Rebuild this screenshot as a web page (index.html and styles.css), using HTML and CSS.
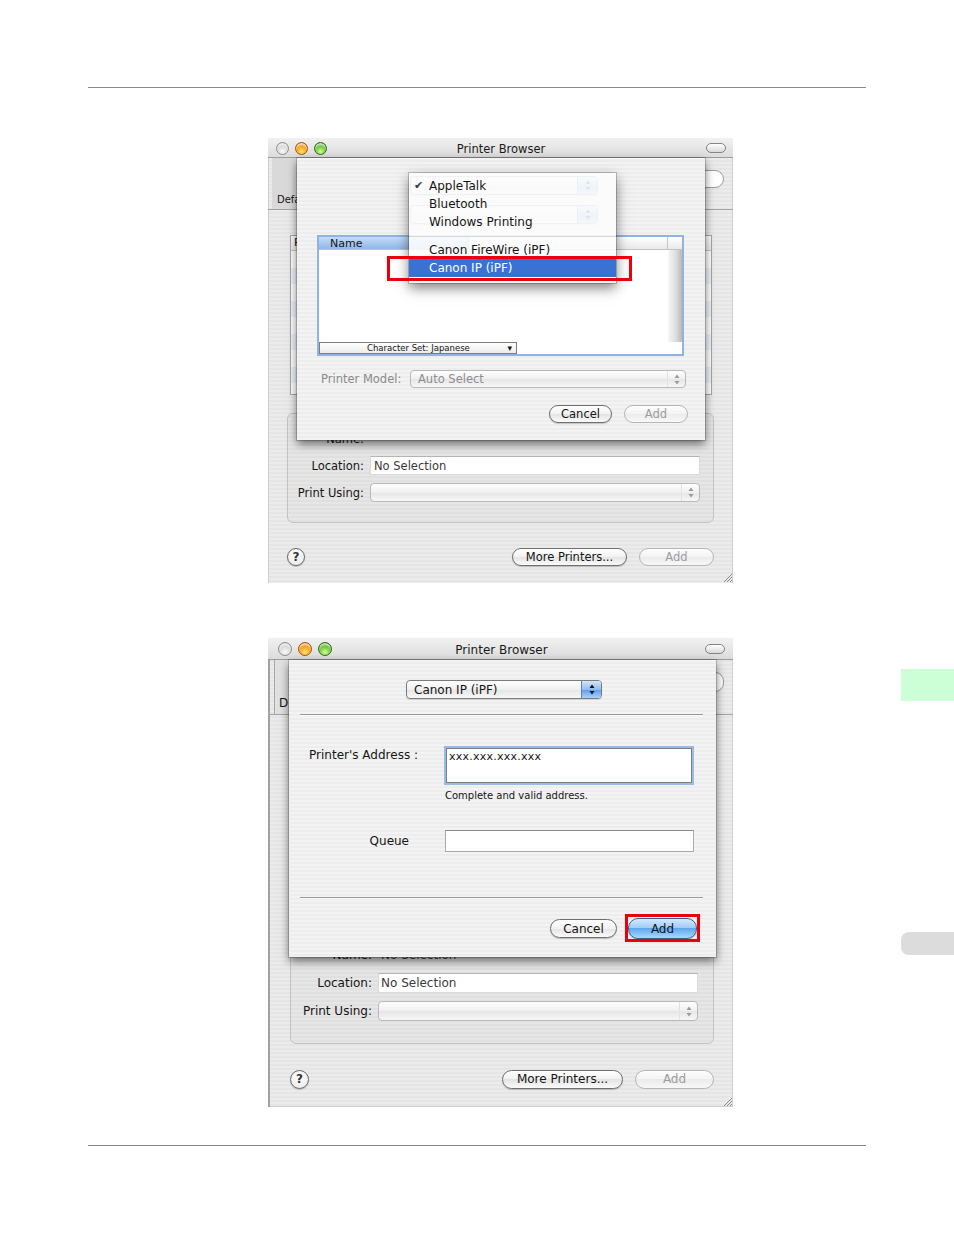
FILE: index.html
```html
<!DOCTYPE html>
<html lang="en">

<head>
    <meta charset="UTF-8">
    <meta name="viewport" content="width=device-width, initial-scale=1.0">
    <title>Printer Browser</title>
    <link rel="stylesheet" href="styles.css">
</head>

<body>
    <div class="page">
        <div class="rule"></div>

        <!-- shot 1 : connection menu open on the IP sheet -->
        <div class="win win-a">
            <div class="titlebar">
                <div class="lights"><i class="light gray"></i><i class="light amber"></i><i class="light green"></i></div>
                <div class="title">Printer Browser</div>
                <div class="pill"></div>
            </div>
            <div class="toolbar">
                <div class="tool"><span>Defa</span></div>
                <div class="search"></div>
            </div>
            <div class="content">
                <div class="plist">
                    <div class="plist-head">P</div>
                    <div class="plist-body"></div>
                </div>
                <div class="group">
                    <label>Name:</label><div class="field plain"></div>
                    <label>Location:</label><div class="field">No Selection</div>
                    <label>Print Using:</label>
                    <div class="popup off"><span class="ptext"></span><span class="arrows"><svg class="ud" width="6" height="11" viewBox="0 0 6 11"><path d="M3 .5L5.5 4H.5zM3 10.5L.5 7h5z"/></svg></span></div>
                </div>
                <div class="footer">
                    <span class="help">?</span>
                    <span class="btn more">More Printers...</span>
                    <span class="btn off add">Add</span>
                </div>
            </div>
            <svg class="grip" width="11" height="11" viewBox="0 0 11 11"><path d="M10 2L2 10M10 5L5 10M10 8L8 10" stroke="#8c8c8c" stroke-width="1"/></svg>

            <div class="sheet sheet-a">
                <div class="popup blue ghost"><span class="ptext"></span><span class="arrows"><svg class="ud" width="6" height="11" viewBox="0 0 6 11"><path d="M3 .5L5.5 4H.5zM3 10.5L.5 7h5z"/></svg></span></div>
                <div class="popup blue ghost second"><span class="ptext"></span><span class="arrows"><svg class="ud" width="6" height="11" viewBox="0 0 6 11"><path d="M3 .5L5.5 4H.5zM3 10.5L.5 7h5z"/></svg></span></div>
                <div class="listbox">
                    <div class="lb-head"><span class="hc sel">Name</span><span class="hc"></span><span class="hc corner"></span></div>
                    <div class="lb-body"></div>
                    <div class="lb-scroll"></div>
                    <div class="lb-foot"><span class="charset">Character Set: Japanese<b>&#9662;</b></span></div>
                    <div class="lb-end"></div>
                </div>
                <div class="model-row">
                    <span class="dim">Printer Model:</span>
                    <div class="popup off"><span class="ptext">Auto Select</span><span class="arrows"><svg class="ud" width="6" height="11" viewBox="0 0 6 11"><path d="M3 .5L5.5 4H.5zM3 10.5L.5 7h5z"/></svg></span></div>
                </div>
                <div class="btns">
                    <span class="btn cancel">Cancel</span>
                    <span class="btn off add">Add</span>
                </div>
            </div>

            <div class="menu">
                <div class="mi"><span class="tick">&#10004;</span><span>AppleTalk</span></div>
                <div class="mi"><span></span><span>Bluetooth</span></div>
                <div class="mi"><span></span><span>Windows Printing</span></div>
                <div class="msep"></div>
                <div class="mi"><span></span><span>Canon FireWire (iPF)</span></div>
                <div class="mi on"><span></span><span>Canon IP (iPF)</span></div>
            </div>
            <div class="mark mark-a"></div>
        </div>

        <!-- shot 2 : address typed, Add is default -->
        <div class="win win-b">
            <div class="titlebar">
                <div class="lights"><i class="light gray"></i><i class="light amber"></i><i class="light green"></i></div>
                <div class="title">Printer Browser</div>
                <div class="pill"></div>
            </div>
            <div class="toolbar">
                <div class="tool"><span>D</span></div>
                <div class="search"></div>
            </div>
            <div class="content">
                <div class="plist">
                    <div class="plist-head"></div>
                    <div class="plist-body"></div>
                </div>
                <div class="group">
                    <label>Name:</label><div class="field plain">No Selection</div>
                    <label>Location:</label><div class="field">No Selection</div>
                    <label>Print Using:</label>
                    <div class="popup off"><span class="ptext"></span><span class="arrows"><svg class="ud" width="6" height="11" viewBox="0 0 6 11"><path d="M3 .5L5.5 4H.5zM3 10.5L.5 7h5z"/></svg></span></div>
                </div>
                <div class="footer">
                    <span class="help">?</span>
                    <span class="btn more">More Printers...</span>
                    <span class="btn off add">Add</span>
                </div>
            </div>
            <svg class="grip" width="11" height="11" viewBox="0 0 11 11"><path d="M10 2L2 10M10 5L5 10M10 8L8 10" stroke="#8c8c8c" stroke-width="1"/></svg>

            <div class="sheet sheet-b">
                <div class="popup blue conn"><span class="ptext">Canon IP (iPF)</span><span class="arrows"><svg class="ud" width="6" height="11" viewBox="0 0 6 11"><path d="M3 .5L5.5 4H.5zM3 10.5L.5 7h5z"/></svg></span></div>
                <div class="sep first"></div>
                <div class="frow addr-row">
                    <span class="flabel">Printer's Address :</span>
                    <div class="addr">xxx.xxx.xxx.xxx</div>
                </div>
                <div class="frow">
                    <span></span>
                    <span class="hint">Complete and valid address.</span>
                </div>
                <div class="frow queue-row">
                    <span class="flabel queue">Queue</span>
                    <div class="qfield"></div>
                </div>
                <div class="sep second"></div>
                <div class="btns">
                    <span class="btn cancel">Cancel</span>
                    <span class="btn default">Add</span>
                </div>
            </div>
            <div class="mark mark-b"></div>
        </div>

        <div class="rule rule-bottom"></div>

        <div class="tab tab-green"></div>
        <div class="tab tab-gray"></div>
    </div>
</body>

</html>
```

FILE: styles.css
```css
body {
    margin: 0;
    background: #fff;
    font-family: "DejaVu Sans", "Liberation Sans", sans-serif;
    font-size: 11.5px;
    color: #151515;
}

.page {
    position: relative;
    width: 954px;
    height: 1235px;
    padding-top: 87px;
    box-sizing: border-box;
    overflow: hidden;
}

.rule {
    margin: 0 88px;
    border-top: 1px solid #8a8a8a;
}

.rule-bottom {
    margin-top: 38px;
}

/* side index tabs */
.tab {
    position: absolute;
    right: 0;
    width: 53px;
}

.tab-green {
    top: 669px;
    height: 32px;
    background: #ccffd5;
}

.tab-gray {
    top: 932px;
    height: 23px;
    background: #dcdcdc;
    border-radius: 8px 0 0 8px;
}

/* window */
.win {
    position: relative;
    margin-left: 268px;
    width: 465px;
    box-sizing: border-box;
    background: repeating-linear-gradient(#ebebeb 0 2px, #e5e5e5 2px 4px);
}

.win-a {
    margin-top: 50px;
    height: 445px;
    box-shadow: inset 1px 0 #cfcfcf, inset -1px 0 #cfcfcf;
}

.win-b {
    margin-top: 55px;
    height: 469px;
    box-shadow: inset 2px 0 #a3a3a3, inset -1px 0 #cfcfcf, inset 0 -1px #d0d0d0;
}

.titlebar {
    display: grid;
    grid-template-columns: 1fr auto 1fr;
    align-items: center;
    height: 20px;
    box-sizing: border-box;
    padding: 1px 7px 0 8px;
    background: linear-gradient(#f1f1f1, #dcdcdc);
    border-bottom: 1px solid #9c9c9c;
}

.win-b .titlebar {
    height: 22px;
    padding: 1px 8px 0 10px;
    font-size: 12px;
}

.lights {
    display: flex;
    gap: 6px;
}

.light {
    width: 13px;
    height: 13px;
    border-radius: 50%;
    box-sizing: border-box;
    box-shadow: inset 0 2px 2px rgba(255, 255, 255, .75);
}

.win-b .light {
    width: 14px;
    height: 14px;
}

.light.gray {
    background: radial-gradient(circle at 50% 75%, #fafafa, #d6d6d6 55%, #b5b5b5);
    border: 1px solid #8e8e8e;
}

.light.amber {
    background: radial-gradient(circle at 50% 78%, #ffe27a, #f5a21c 50%, #cf6a00);
    border: 1px solid #a85800;
}

.light.green {
    background: radial-gradient(circle at 50% 78%, #dcff9c, #6ec63a 50%, #2f8c12);
    border: 1px solid #2b6d14;
}

.title {
    padding-top: 2px;
    color: #1a1a1a;
}

.pill {
    justify-self: end;
    width: 18px;
    height: 8px;
    border: 1px solid #858585;
    border-radius: 5px;
    background: linear-gradient(#fff, #d9d9d9);
}

.toolbar {
    display: flex;
    justify-content: space-between;
    height: 52px;
    box-sizing: border-box;
    border-bottom: 1px solid #a3a3a3;
}

.win-b .toolbar {
    height: 55px;
}

.tool {
    display: flex;
    align-items: flex-end;
    margin-left: 4px;
    width: 90px;
    padding: 0 0 4px 5px;
    background: #d9d9d9;
    font-size: 10px;
    white-space: nowrap;
}

.win-b .tool {
    margin-left: 6px;
    padding-left: 4px;
    border-left: 1px solid #a9a9a9;
    background: #e1e1e1;
    font-size: 12px;
}

.search {
    margin: 12px 9px 0 0;
    width: 120px;
    height: 16px;
    border: 1px solid #9a9a9a;
    border-radius: 9px;
    background: #fff;
}

.win-b .search {
    height: 18px;
}

.content {
    padding: 25px 19px 17px 19px;
}

.win-b .content {
    padding: 22px 19px 19px 22px;
}

.plist {
    margin: 0 2px 0 3px;
    height: 160px;
    border: 1px solid #a5a5a5;
    box-sizing: border-box;
    background: #fff;
}

.win-b .plist {
    margin: 0;
    height: 176px;
}

.plist-head {
    height: 14px;
    padding-left: 3px;
    border-bottom: 1px solid #c6c6c6;
    background: linear-gradient(#fff, #ececec);
    font-size: 11px;
    line-height: 14px;
}

.plist-body {
    height: calc(100% - 15px);
    background: repeating-linear-gradient(#fff 0 17px, #edf3fe 17px 33px);
}

.group {
    display: grid;
    grid-template-columns: 70px 330px;
    column-gap: 6px;
    row-gap: 8px;
    align-items: center;
    margin-top: 18px;
    padding: 15px 15px 20px 6px;
    border: 1px solid #c2c2c2;
    border-radius: 6px;
    background: rgba(0, 0, 0, .018);
}

.win-b .group {
    grid-template-columns: 75px 320px;
    padding: 13px 15px 22px 6px;
    font-size: 12px;
}

.group label {
    text-align: right;
    white-space: nowrap;
}

.field {
    height: 19px;
    box-sizing: border-box;
    padding-left: 3px;
    line-height: 18px;
    background: #fff;
    border: 1px solid #dadada;
    border-top-color: #b5b5b5;
    color: #3a3a3a;
}

.win-b .field {
    height: 20px;
    line-height: 19px;
    padding-left: 2px;
}

.field.plain {
    background: transparent;
    border-color: transparent;
}

.win-b .group .popup {
    height: 20px;
}

/* aqua popup */
.popup {
    display: flex;
    align-items: center;
    height: 19px;
    box-sizing: border-box;
    border: 1px solid #8a8a8a;
    border-radius: 4px;
    background: linear-gradient(#fefefe, #f0f0f0 50%, #e5e5e5 50%, #f7f7f7);
    box-shadow: 0 1px 1px rgba(0, 0, 0, .12);
}

.popup .ptext {
    flex: 1;
    padding-left: 7px;
    white-space: nowrap;
}

.popup .arrows {
    display: flex;
    align-items: center;
    justify-content: center;
    width: 17px;
    height: 100%;
    border-left: 1px solid #cfcfcf;
    color: #333;
}

.ud {
    fill: currentColor;
}

.popup.off {
    border-color: #b9b9b9;
    color: #8d8d8d;
    box-shadow: none;
}

.popup.off .arrows {
    color: #9a9a9a;
    border-left-color: #e2e2e2;
}

.popup.blue .arrows {
    width: 19px;
    border-left: 1px solid #5a86c0;
    border-radius: 0 3px 3px 0;
    background: linear-gradient(#d2e6fc, #8fbdf2 50%, #5c9be8 50%, #a9d2fa);
    color: #111;
}

/* aqua push buttons */
.btn {
    display: inline-flex;
    align-items: center;
    justify-content: center;
    height: 18px;
    box-sizing: border-box;
    border: 1px solid #6f6f6f;
    border-radius: 10px;
    background: linear-gradient(#ffffff, #f1f1f1 50%, #e3e3e3 50%, #fafafa);
    box-shadow: 0 1px 1px rgba(0, 0, 0, .2);
    white-space: nowrap;
}

.btn.off {
    border-color: #b6b6b6;
    color: #9c9c9c;
    box-shadow: none;
    background: linear-gradient(#fdfdfd, #f3f3f3 50%, #ebebeb 50%, #f8f8f8);
}

.btn.default {
    border-color: #3d5f94;
    background: linear-gradient(#d4e8fd, #9ccaf6 50%, #5fa8ef 50%, #a8dafd);
}

.footer {
    display: flex;
    align-items: center;
    gap: 12px;
    height: 18px;
    margin-top: 25px;
}

.win-b .footer {
    height: 20px;
    font-size: 12px;
}

.help {
    width: 18px;
    height: 18px;
    box-sizing: border-box;
    border: 1px solid #6a6a6a;
    border-radius: 50%;
    background: radial-gradient(circle at 50% 35%, #fff, #e6e6e6);
    box-shadow: 0 1px 1px rgba(0, 0, 0, .2);
    text-align: center;
    font-size: 12px;
    font-weight: bold;
    line-height: 16px;
    color: #333;
}

.win-b .help {
    width: 19px;
    height: 19px;
    line-height: 17px;
}

.footer .more {
    margin-left: auto;
    width: 115px;
}

.footer .add {
    width: 75px;
}

.win-b .footer .btn {
    height: 19px;
}

.win-b .footer .more {
    width: 121px;
}

.win-b .footer .add {
    width: 79px;
}

.grip {
    position: absolute;
    right: 0;
    bottom: 0;
}

/* sheets */
.sheet {
    position: absolute;
    box-sizing: border-box;
    background: repeating-linear-gradient(#f3f3f3 0 2px, #ededed 2px 4px);
    box-shadow: 0 0 0 1px rgba(0, 0, 0, .18), 0 4px 9px rgba(0, 0, 0, .55);
}

.sheet-a {
    left: 29px;
    top: 20px;
    width: 408px;
    height: 282px;
    padding: 18px 17px 17px 20px;
}

.ghost {
    margin-left: 93px;
    width: 188px;
    color: #555;
}

.ghost.second {
    margin-top: 10px;
}

.listbox {
    display: grid;
    grid-template-rows: 13px 1fr 12px;
    grid-template-columns: 1fr 14px;
    margin-top: 11px;
    width: 367px;
    height: 121px;
    box-sizing: border-box;
    border: 2px solid #8fb4e4;
    background: #fff;
}

.lb-head {
    grid-column: 1 / 3;
    display: flex;
    border-bottom: 1px solid #c4c4c4;
    background: linear-gradient(#fff, #e9e9e9);
    font-size: 11px;
    line-height: 13px;
}

.hc {
    flex: 1;
}

.hc.sel {
    flex: none;
    width: 150px;
    padding-left: 11px;
    box-sizing: border-box;
    background: linear-gradient(#c6dcf7, #8db6ea);
    border-right: 1px solid #7ea2d2;
}

.hc.corner {
    flex: none;
    width: 14px;
    border-left: 1px solid #c4c4c4;
}

.lb-scroll {
    background: linear-gradient(to right, #f7f7f7, #dedede 55%, #b9b9b9);
}

.lb-foot {
    display: flex;
}

.charset {
    display: flex;
    justify-content: space-between;
    align-items: center;
    width: 198px;
    box-sizing: border-box;
    padding: 0 4px 0 47px;
    border: 1px solid #7d7d7d;
    background: linear-gradient(#fff, #ececec);
    font-size: 8.5px;
    line-height: 10px;
}

.charset b {
    font-weight: normal;
    font-size: 9px;
}

.model-row {
    display: grid;
    grid-template-columns: 93px 276px;
    align-items: center;
    margin-top: 14px;
    height: 18px;
}

.model-row .popup {
    height: 18px;
}

.dim {
    padding-left: 4px;
    color: #8a8a8a;
    white-space: nowrap;
}

.btns {
    display: flex;
    justify-content: flex-end;
    gap: 12px;
    margin-top: 17px;
}

.sheet-a .cancel {
    width: 63px;
}

.sheet-a .add {
    width: 64px;
}

.sheet-b {
    left: 21px;
    top: 22px;
    width: 427px;
    height: 297px;
    padding: 20px 13px 18px 11px;
    font-size: 12px;
}

.conn {
    margin-left: 106px;
    width: 196px;
    border-color: #7b7b7b;
}

.sep {
    height: 1px;
    background: #999;
    box-shadow: 0 1px #fafafa;
}

.sep.first {
    margin-top: 15px;
}

.sep.second {
    margin-top: 45px;
}

.frow {
    display: grid;
    grid-template-columns: 118px 250px;
    column-gap: 26px;
}

.flabel {
    text-align: right;
    white-space: nowrap;
}

.addr-row {
    margin-top: 31px;
}

.addr-row .flabel {
    line-height: 16px;
    padding-top: 1px;
}

.addr {
    height: 35px;
    box-sizing: border-box;
    margin: 2px;
    padding: 1px 2px 0;
    border: 1px solid #7e7e7e;
    background: #fff;
    box-shadow: 0 0 0 2px #98bce8;
    font-size: 11px;
    letter-spacing: .25px;
    line-height: 13px;
}

.hint {
    margin: 5px 0 0 1px;
    height: 12px;
    font-size: 10px;
    line-height: 12px;
}

.queue-row {
    margin-top: 28px;
    align-items: center;
}

.queue {
    padding-right: 9px;
}

.qfield {
    margin-left: 1px;
    height: 22px;
    box-sizing: border-box;
    border: 1px solid #a9a9a9;
    border-top-color: #8a8a8a;
    background: #fff;
}

.sheet-b .btns {
    gap: 11px;
    margin: 20px 6px 0 0;
    align-items: center;
}

.sheet-b .cancel {
    width: 67px;
    height: 19px;
}

.sheet-b .default {
    width: 69px;
    height: 21px;
}

/* pop-up menu */
.menu {
    position: absolute;
    left: 141px;
    top: 35px;
    width: 207px;
    height: 110px;
    box-sizing: border-box;
    padding-top: 4px;
    background: rgba(252, 252, 252, .9);
    box-shadow: 0 0 0 1px rgba(0, 0, 0, .2), 0 5px 12px rgba(0, 0, 0, .5);
    font-size: 12px;
}

.mi {
    display: grid;
    grid-template-columns: 20px 1fr;
    height: 18px;
    line-height: 18px;
}

.mi .tick {
    padding-left: 5px;
    font-size: 11px;
    color: #3a3a3a;
}

.mi.on {
    background: #3a72d4;
    color: #fff;
}

.msep {
    height: 1px;
    margin: 5px 0 4px;
    background: #d6d6d6;
}

/* red callouts */
.mark {
    position: absolute;
    box-sizing: border-box;
    border: 3px solid #e8000b;
}

.mark-a {
    left: 119px;
    top: 118px;
    width: 245px;
    height: 25px;
}

.mark-b {
    left: 357px;
    top: 276px;
    width: 75px;
    height: 28px;
}
```
